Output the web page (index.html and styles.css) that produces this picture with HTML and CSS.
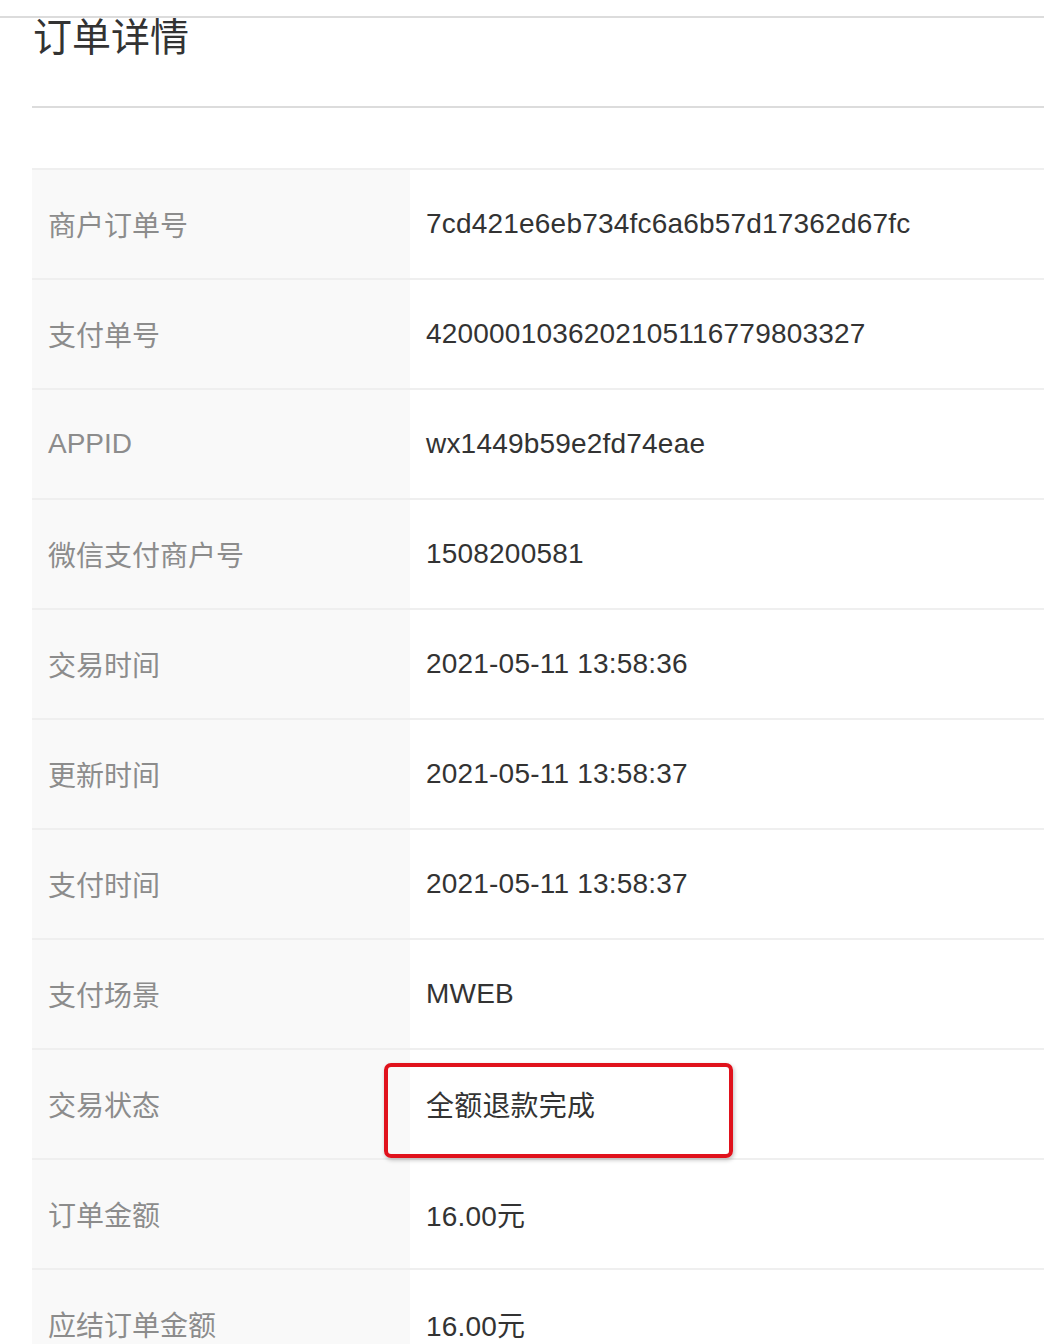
FILE: index.html
```html
<!DOCTYPE html>
<html lang="zh-CN">
<head>
<meta charset="utf-8">
<title>订单详情</title>
<link rel="stylesheet" href="styles.css">
</head>
<body>
<div class="topline"></div>
<main class="page">
  <h1 class="title">订单详情</h1>
  <div class="table">
    <div class="row"><div class="label">商户订单号</div><div class="value">7cd421e6eb734fc6a6b57d17362d67fc</div></div>
    <div class="row"><div class="label">支付单号</div><div class="value">4200001036202105116779803327</div></div>
    <div class="row"><div class="label">APPID</div><div class="value">wx1449b59e2fd74eae</div></div>
    <div class="row"><div class="label">微信支付商户号</div><div class="value">1508200581</div></div>
    <div class="row"><div class="label">交易时间</div><div class="value">2021-05-11 13:58:36</div></div>
    <div class="row"><div class="label">更新时间</div><div class="value">2021-05-11 13:58:37</div></div>
    <div class="row"><div class="label">支付时间</div><div class="value">2021-05-11 13:58:37</div></div>
    <div class="row"><div class="label">支付场景</div><div class="value">MWEB</div></div>
    <div class="row"><div class="label">交易状态</div><div class="value highlight-cell">全额退款完成<span class="mark"></span></div></div>
    <div class="row"><div class="label">订单金额</div><div class="value">16.00元</div></div>
    <div class="row"><div class="label">应结订单金额</div><div class="value">16.00元</div></div>
  </div>
</main>
</body>
</html>
```
FILE: styles.css
```css
html, body {
  margin: 0;
  padding: 0;
  background: #fff;
}
body {
  font-family: "Liberation Sans", "Noto Sans CJK SC", sans-serif;
  color: #333;
  overflow: hidden;
}
.topline {
  height: 16px;
  border-bottom: 2px solid #dcdcdc;
}
.page {
  padding-left: 32px;
}
.title {
  margin: 0;
  padding: 0 0 49px 1px;
  font-size: 39px;
  line-height: 39px;
  font-weight: normal;
  color: #333;
  border-bottom: 2px solid #dcdcdc;
}
.table {
  margin-top: 60px;
  border-top: 2px solid #efefef;
}
.row {
  display: flex;
  height: 108px;
  border-bottom: 2px solid #efefef;
}
.label {
  width: 378px;
  flex: none;
  box-sizing: border-box;
  padding-left: 16px;
  padding-bottom: 1px;
  background: #f9f9f9;
  color: #8c8c8c;
  font-size: 28px;
  display: flex;
  align-items: center;
}
.value {
  flex: 1;
  padding-left: 16px;
  font-size: 28px;
  letter-spacing: 0.2px;
  color: #333;
  display: flex;
  align-items: center;
}
.highlight-cell {
  position: relative;
}
.mark {
  position: absolute;
  left: -26px;
  top: 13px;
  width: 341px;
  height: 87px;
  border: 4px solid #e0121c;
  border-radius: 7px;
  box-shadow: 1px 2px 4px rgba(0, 0, 0, 0.25);
}
```
